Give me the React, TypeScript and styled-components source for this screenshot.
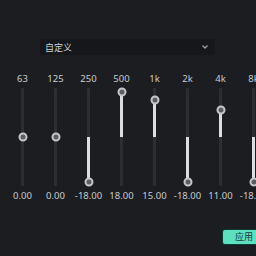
import styled, { createGlobalStyle } from "styled-components";

const GlobalStyle = createGlobalStyle`
  html, body {
    margin: 0;
    padding: 0;
    background: #1b1d21;
    overflow: hidden;
  }
  body {
    font-family: "Noto Sans", "Noto Sans CJK SC", sans-serif;
  }
`;

const BANDS = [
  { label: "63", value: 0 },
  { label: "125", value: 0 },
  { label: "250", value: -18 },
  { label: "500", value: 18 },
  { label: "1k", value: 15 },
  { label: "2k", value: -18 },
  { label: "4k", value: 11 },
  { label: "8k", value: -18 },
];

const TRACK_H = 98;
const MID = 49;
const PX_PER_DB = 2.5;

export default function App() {
  return (
    <>
      <GlobalStyle />
      <Panel>
        <Select>
          <span>自定义</span>
          <svg width="8" height="6" viewBox="0 0 8 6">
            <path
              d="M1.5 1.5 L4 4 L6.5 1.5"
              stroke="#9a9da3"
              strokeWidth="1.3"
              fill="none"
            />
          </svg>
        </Select>
        <Bands>
          {BANDS.map((b) => {
            const knob = MID - b.value * PX_PER_DB;
            const top = Math.min(knob, MID);
            const h = Math.abs(knob - MID);
            return (
              <Band key={b.label}>
                <Label>{b.label}</Label>
                <Track>
                  <Fill style={{ top, height: h }} />
                  <Knob style={{ top: knob }} />
                </Track>
                <Value>{b.value.toFixed(2)}</Value>
              </Band>
            );
          })}
        </Bands>
        <Footer>
          <Apply>应用</Apply>
        </Footer>
      </Panel>
    </>
  );
}

const Panel = styled.div`
  width: 290px;
  padding: 39px 0 0 6px;
  display: flex;
  flex-direction: column;
`;

const Select = styled.div`
  margin-left: 34px;
  width: 175px;
  height: 16px;
  box-sizing: border-box;
  padding: 0 6px 0 5px;
  background: #15171a;
  border-radius: 3px;
  display: flex;
  align-items: center;
  justify-content: space-between;
  color: #d0d2d5;
  font-size: 9px;
`;

const Bands = styled.div`
  margin-top: 18px;
  display: grid;
  grid-template-columns: repeat(8, 33px);
`;

const Band = styled.div`
  display: flex;
  flex-direction: column;
  align-items: center;
`;

const Label = styled.div`
  height: 12px;
  line-height: 12px;
  font-size: 9.5px;
  color: #c9cbce;
  margin-bottom: 3px;
`;

const Track = styled.div`
  position: relative;
  width: 3px;
  height: ${TRACK_H}px;
  background: #2b2e33;
  border-radius: 1px;
`;

const Fill = styled.div`
  position: absolute;
  left: 0;
  width: 3px;
  background: #dcdde0;
`;

const Knob = styled.div`
  position: absolute;
  left: 50%;
  width: 9px;
  height: 9px;
  box-sizing: border-box;
  border-radius: 50%;
  background: #5a5d62;
  border: 2.5px solid #c4c6ca;
  transform: translate(-50%, -50%);
`;

const Value = styled.div`
  margin-top: 4px;
  height: 12px;
  line-height: 12px;
  font-size: 9.5px;
  color: #c9cbce;
  white-space: nowrap;
`;

const Footer = styled.div`
  margin-top: 27px;
  display: flex;
  padding-left: 216px;
`;

const Apply = styled.button`
  width: 44px;
  height: 16px;
  padding: 0;
  border: 1px solid #0e3a30;
  border-radius: 3px;
  background: #5ce0bf;
  color: #1d3b33;
  font-family: "Noto Sans CJK SC", sans-serif;
  font-size: 9px;
  line-height: 14px;
`;
